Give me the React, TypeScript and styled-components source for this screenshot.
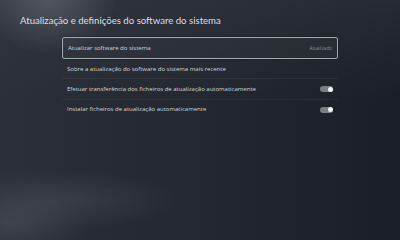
import React from "react";
import styled, { createGlobalStyle } from "styled-components";

const Global = createGlobalStyle`
  html, body { margin: 0; padding: 0; background: #20252d; overflow: hidden; }
  #root { width: 100%; min-height: 100vh; }
`;

const Screen = styled.div`
  width: 100%;
  min-width: 400px;
  height: 100vh;
  min-height: 225px;
  overflow: hidden;
  box-sizing: border-box;
  padding: 13px 0 0 20px;
  font-family: "Open Sans", "Noto Sans", sans-serif;
  background:
    radial-gradient(ellipse 70px 60px at 48px -6px, rgba(130, 134, 145, 0.45), rgba(130, 134, 145, 0) 100%),
    radial-gradient(ellipse 130px 30px at 50px 200px, rgba(105, 105, 120, 0.3), rgba(105, 105, 120, 0) 100%),
    radial-gradient(ellipse 80px 30px at 10px 225px, rgba(110, 110, 125, 0.3), rgba(110, 110, 125, 0) 100%),
    linear-gradient(180deg, rgba(60, 64, 74, 0.35) 0px, rgba(60, 64, 74, 0) 100px),
    linear-gradient(90deg, #2a2f38 0%, #232831 45%, #1a1f27 100%);
`;

const Title = styled.h1`
  margin: 0;
  font-family: Lato, "Open Sans", sans-serif;
  font-size: 9.6px;
  line-height: 16px;
  font-weight: 400;
  color: #dcdee3;
  white-space: nowrap;
`;

const List = styled.div`
  display: flex;
  flex-direction: column;
  margin: 8px 0 0 42px;
  width: 276px;
`;

const Row = styled.div<{ $selected?: boolean }>`
  display: flex;
  align-items: center;
  justify-content: space-between;
  box-sizing: border-box;
  height: ${(p) => (p.$selected ? "22px" : "20.3px")};
  padding: 0 5px;
  border-bottom: 1px solid rgba(255, 255, 255, 0.05);
  &:last-child {
    border-bottom-color: transparent;
  }
  ${(p) =>
    p.$selected &&
    `
    border: 1px solid #a3a8b0;
    border-radius: 2px;
    background: rgba(255, 255, 255, 0.025);
    box-shadow: 0 0 2px rgba(0,0,0,0.5);
  `}
`;

const Label = styled.span`
  font-size: 6px;
  color: #d4d7dc;
  white-space: nowrap;
`;

const Status = styled.span`
  font-size: 4.6px;
  color: #8c9098;
  white-space: nowrap;
`;

const Toggle = styled.span<{ $on?: boolean }>`
  position: relative;
  display: inline-block;
  width: 13px;
  height: 6px;
  border-radius: 3px;
  background: #7b7e85;
  margin-top: 1px;
  &::after {
    content: "";
    position: absolute;
    top: 0.5px;
    left: ${(p) => (p.$on ? "7.5px" : "0.5px")};
    width: 5px;
    height: 5px;
    border-radius: 50%;
    background: #f2f3f5;
  }
`;

const rows = [
  { label: "Atualizar software do sistema", status: "Atualizado", selected: true },
  { label: "Sobre a atualização do software do sistema mais recente" },
  { label: "Efetuar transferência dos ficheiros de atualização automaticamente", toggle: true },
  { label: "Instalar ficheiros de atualização automaticamente", toggle: true },
];

export default function App() {
  return (
    <>
      <Global />
      <Screen>
        <Title>Atualização e definições do software do sistema</Title>
        <List>
          {rows.map((r) => (
            <Row key={r.label} $selected={r.selected}>
              <Label>{r.label}</Label>
              {r.status && <Status>{r.status}</Status>}
              {r.toggle && <Toggle $on />}
            </Row>
          ))}
        </List>
      </Screen>
    </>
  );
}
